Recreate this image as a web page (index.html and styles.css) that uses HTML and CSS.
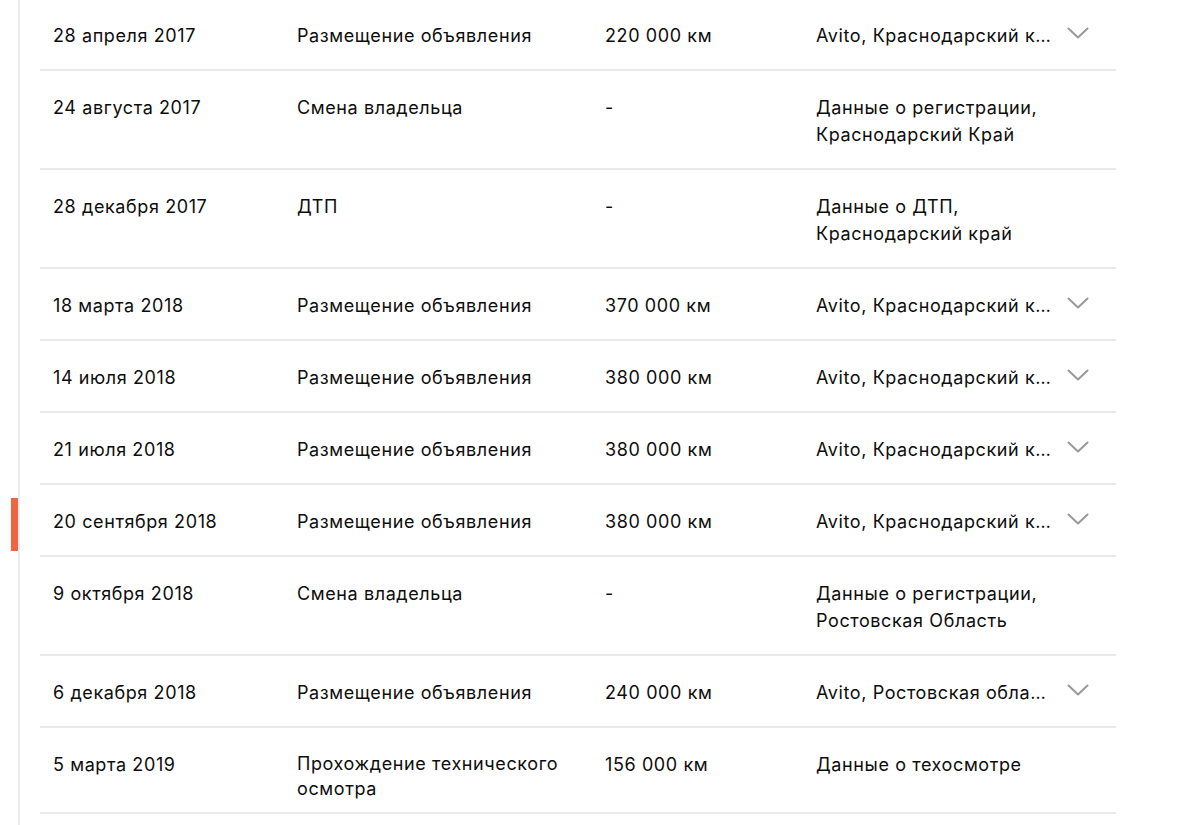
FILE: index.html
```html
<!DOCTYPE html>
<html lang="ru">
<head>
<meta charset="utf-8">
<title>История автомобиля</title>
<link rel="stylesheet" href="styles.css">
</head>
<body>
<div class="timeline">
  <span class="marker"></span>
  <div class="table">
    <div class="row">
      <div class="cell date">28 апреля 2017</div>
      <div class="cell event">Размещение объявления</div>
      <div class="cell km">220 000 км</div>
      <div class="cell src"><span class="src-text trunc" title="Avito, Краснодарский край">Avito, Краснодарский край</span><svg class="chev" viewBox="0 0 22 12" width="22" height="12"><path d="M1.5 1.5 L11 10.5 L20.5 1.5" fill="none" stroke="#999" stroke-width="2" stroke-linecap="round" stroke-linejoin="round"/></svg></div>
    </div>
    <div class="row">
      <div class="cell date">24 августа 2017</div>
      <div class="cell event">Смена владельца</div>
      <div class="cell km">-</div>
      <div class="cell src"><span class="src-text">Данные о регистрации,<br>Краснодарский Край</span></div>
    </div>
    <div class="row">
      <div class="cell date">28 декабря 2017</div>
      <div class="cell event">ДТП</div>
      <div class="cell km">-</div>
      <div class="cell src"><span class="src-text">Данные о ДТП,<br>Краснодарский край</span></div>
    </div>
    <div class="row">
      <div class="cell date">18 марта 2018</div>
      <div class="cell event">Размещение объявления</div>
      <div class="cell km">370 000 км</div>
      <div class="cell src"><span class="src-text trunc" title="Avito, Краснодарский край">Avito, Краснодарский край</span><svg class="chev" viewBox="0 0 22 12" width="22" height="12"><path d="M1.5 1.5 L11 10.5 L20.5 1.5" fill="none" stroke="#999" stroke-width="2" stroke-linecap="round" stroke-linejoin="round"/></svg></div>
    </div>
    <div class="row">
      <div class="cell date">14 июля 2018</div>
      <div class="cell event">Размещение объявления</div>
      <div class="cell km">380 000 км</div>
      <div class="cell src"><span class="src-text trunc" title="Avito, Краснодарский край">Avito, Краснодарский край</span><svg class="chev" viewBox="0 0 22 12" width="22" height="12"><path d="M1.5 1.5 L11 10.5 L20.5 1.5" fill="none" stroke="#999" stroke-width="2" stroke-linecap="round" stroke-linejoin="round"/></svg></div>
    </div>
    <div class="row">
      <div class="cell date">21 июля 2018</div>
      <div class="cell event">Размещение объявления</div>
      <div class="cell km">380 000 км</div>
      <div class="cell src"><span class="src-text trunc" title="Avito, Краснодарский край">Avito, Краснодарский край</span><svg class="chev" viewBox="0 0 22 12" width="22" height="12"><path d="M1.5 1.5 L11 10.5 L20.5 1.5" fill="none" stroke="#999" stroke-width="2" stroke-linecap="round" stroke-linejoin="round"/></svg></div>
    </div>
    <div class="row">
      <div class="cell date">20 сентября 2018</div>
      <div class="cell event">Размещение объявления</div>
      <div class="cell km">380 000 км</div>
      <div class="cell src"><span class="src-text trunc" title="Avito, Краснодарский край">Avito, Краснодарский край</span><svg class="chev" viewBox="0 0 22 12" width="22" height="12"><path d="M1.5 1.5 L11 10.5 L20.5 1.5" fill="none" stroke="#999" stroke-width="2" stroke-linecap="round" stroke-linejoin="round"/></svg></div>
    </div>
    <div class="row">
      <div class="cell date">9 октября 2018</div>
      <div class="cell event">Смена владельца</div>
      <div class="cell km">-</div>
      <div class="cell src"><span class="src-text">Данные о регистрации,<br>Ростовская Область</span></div>
    </div>
    <div class="row">
      <div class="cell date">6 декабря 2018</div>
      <div class="cell event">Размещение объявления</div>
      <div class="cell km">240 000 км</div>
      <div class="cell src"><span class="src-text trunc" title="Avito, Ростовская область">Avito, Ростовская область</span><svg class="chev" viewBox="0 0 22 12" width="22" height="12"><path d="M1.5 1.5 L11 10.5 L20.5 1.5" fill="none" stroke="#999" stroke-width="2" stroke-linecap="round" stroke-linejoin="round"/></svg></div>
    </div>
    <div class="row row--tight">
      <div class="cell date">5 марта 2019</div>
      <div class="cell event">Прохождение технического<br>осмотра</div>
      <div class="cell km">156 000 км</div>
      <div class="cell src"><span class="src-text">Данные о техосмотре</span></div>
    </div>
  </div>
</div>
</body>
</html>
```

FILE: styles.css
```css
html, body {
  margin: 0;
  padding: 0;
  background: #fff;
}

body {
  font-family: Inter, "Open Sans", "Liberation Sans", sans-serif;
  font-size: 18px;
  letter-spacing: 0.6px;
  color: #0d0d0d;
}

.timeline {
  position: relative;
  margin-left: 18px;
  border-left: 2px solid #ececec;
  padding-left: 20px;
  width: 1076px;
  margin-top: -1px;
  min-height: 830px;
}

.marker {
  position: absolute;
  left: -9px;
  top: 499px;
  width: 7px;
  height: 53px;
  background: #f0643f;
}

.table {
  display: flex;
  flex-direction: column;
}

.row {
  display: grid;
  grid-template-columns: 257px 308px 211px 300px;
  border-bottom: 2px solid #e9e9e9;
  padding: 23px 0 20px;
  line-height: 27px;
}

.row--tight {
  padding-bottom: 11px;
}

.row--tight .event {
  line-height: 25px;
}

.cell.date {
  padding-left: 13px;
}

.src {
  display: flex;
  align-items: flex-start;
}

.src-text {
  display: block;
}

.src-text.trunc {
  width: 236px;
  white-space: nowrap;
  overflow: hidden;
  text-overflow: ellipsis;
}

.chev {
  margin-left: 15px;
  margin-top: 5px;
  flex: none;
}
```
